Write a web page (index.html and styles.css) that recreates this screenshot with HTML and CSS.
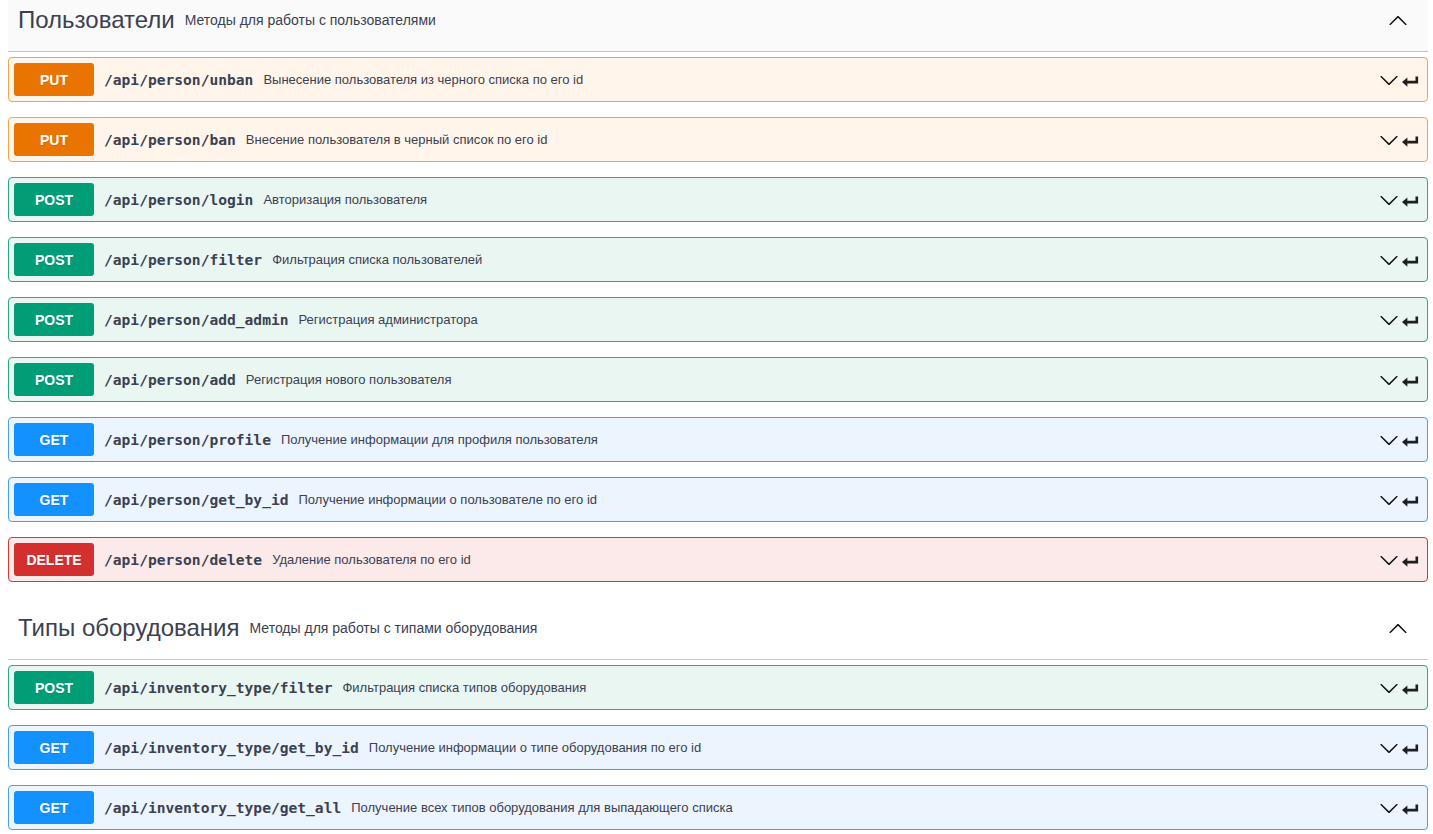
FILE: index.html
```html
<!DOCTYPE html>
<html lang="ru">
<head>
<meta charset="utf-8">
<title>API</title>
<link rel="stylesheet" href="styles.css">
</head>
<body>
<svg width="0" height="0" class="defs">
  <defs>
    <symbol id="arrow-down" viewBox="0 0 20 20"><path d="M17.418 6.109c.272-.268.709-.268.979 0s.271.701 0 .969l-7.908 7.83c-.27.268-.707.268-.979 0l-7.908-7.83c-.27-.268-.27-.701 0-.969.271-.268.709-.268.979 0L10 13.25l7.418-7.141z"/></symbol>
    <symbol id="arrow-up" viewBox="0 0 20 20"><path d="M17.418 14.908c.272.268.709.268.979 0s.271-.701 0-.969l-7.908-7.83c-.27-.268-.707-.268-.979 0l-7.908 7.83c-.27.268-.27.701 0 .969.271.268.709.268.979 0L10 7.767l7.418 7.141z"/></symbol>
    <symbol id="jump-to" viewBox="0 0 20 20"><path d="M16.8 6.5v5.6H6.5" fill="none" stroke="currentColor" stroke-width="2.6"/><path d="M2 12.1L7.4 7.4v9.4z"/></symbol>
  </defs>
</svg>
<div class="wrapper">
  <section class="tag-section">
    <h3 class="tag tag-first">
      <span class="tag-title">Пользователи</span>
      <small class="tag-desc">Методы для работы с пользователями</small>
      <span class="spacer"></span>
      <svg class="tag-arrow"><use href="#arrow-up"/></svg>
    </h3>
    <div class="opblock put"><span class="method">PUT</span><span class="path">/api/person/unban</span><span class="desc">Вынесение пользователя из черного списка по его id</span><svg class="arrow"><use href="#arrow-down"/></svg><svg class="jump"><use href="#jump-to"/></svg></div>
    <div class="opblock put"><span class="method">PUT</span><span class="path">/api/person/ban</span><span class="desc">Внесение пользователя в черный список по его id</span><svg class="arrow"><use href="#arrow-down"/></svg><svg class="jump"><use href="#jump-to"/></svg></div>
    <div class="opblock post"><span class="method">POST</span><span class="path">/api/person/login</span><span class="desc">Авторизация пользователя</span><svg class="arrow"><use href="#arrow-down"/></svg><svg class="jump"><use href="#jump-to"/></svg></div>
    <div class="opblock post"><span class="method">POST</span><span class="path">/api/person/filter</span><span class="desc">Фильтрация списка пользователей</span><svg class="arrow"><use href="#arrow-down"/></svg><svg class="jump"><use href="#jump-to"/></svg></div>
    <div class="opblock post"><span class="method">POST</span><span class="path">/api/person/add_admin</span><span class="desc">Регистрация администратора</span><svg class="arrow"><use href="#arrow-down"/></svg><svg class="jump"><use href="#jump-to"/></svg></div>
    <div class="opblock post"><span class="method">POST</span><span class="path">/api/person/add</span><span class="desc">Регистрация нового пользователя</span><svg class="arrow"><use href="#arrow-down"/></svg><svg class="jump"><use href="#jump-to"/></svg></div>
    <div class="opblock get"><span class="method">GET</span><span class="path">/api/person/profile</span><span class="desc">Получение информации для профиля пользователя</span><svg class="arrow"><use href="#arrow-down"/></svg><svg class="jump"><use href="#jump-to"/></svg></div>
    <div class="opblock get"><span class="method">GET</span><span class="path">/api/person/get_by_id</span><span class="desc">Получение информации о пользователе по его id</span><svg class="arrow"><use href="#arrow-down"/></svg><svg class="jump"><use href="#jump-to"/></svg></div>
    <div class="opblock delete"><span class="method">DELETE</span><span class="path">/api/person/delete</span><span class="desc">Удаление пользователя по его id</span><svg class="arrow"><use href="#arrow-down"/></svg><svg class="jump"><use href="#jump-to"/></svg></div>
  </section>
  <section class="tag-section">
    <h3 class="tag">
      <span class="tag-title">Типы оборудования</span>
      <small class="tag-desc">Методы для работы с типами оборудования</small>
      <span class="spacer"></span>
      <svg class="tag-arrow"><use href="#arrow-up"/></svg>
    </h3>
    <div class="opblock post"><span class="method">POST</span><span class="path">/api/inventory_type/filter</span><span class="desc">Фильтрация списка типов оборудования</span><svg class="arrow"><use href="#arrow-down"/></svg><svg class="jump"><use href="#jump-to"/></svg></div>
    <div class="opblock get"><span class="method">GET</span><span class="path">/api/inventory_type/get_by_id</span><span class="desc">Получение информации о типе оборудования по его id</span><svg class="arrow"><use href="#arrow-down"/></svg><svg class="jump"><use href="#jump-to"/></svg></div>
    <div class="opblock get"><span class="method">GET</span><span class="path">/api/inventory_type/get_all</span><span class="desc">Получение всех типов оборудования для выпадающего списка</span><svg class="arrow"><use href="#arrow-down"/></svg><svg class="jump"><use href="#jump-to"/></svg></div>
  </section>
</div>
</body>
</html>
```
FILE: styles.css
```css
html, body {
  margin: 0;
  padding: 0;
  background: #fff;
  overflow: hidden;
}
body {
  font-family: "Liberation Sans", Arial, sans-serif;
  color: #3b4151;
}
.defs {
  position: absolute;
  width: 0;
  height: 0;
  overflow: hidden;
}
.wrapper {
  padding: 0 5px 0 8px;
}
.tag {
  display: flex;
  align-items: center;
  box-sizing: border-box;
  height: 63px;
  margin: 0 0 5px;
  padding: 0 20px 0 10px;
  border-bottom: 1px solid rgba(59, 65, 81, 0.3);
  font-weight: normal;
}
.tag-first {
  margin-top: -11px;
  background: #fafafa;
}
.tag-title {
  font-size: 24px;
  color: #3b4151;
}
.tag-desc {
  font-size: 14px;
  margin-left: 10px;
  color: #3b4151;
}
.spacer {
  flex: 1;
}
.tag-arrow {
  width: 20px;
  height: 20px;
  fill: #111;
}
.opblock {
  display: flex;
  align-items: center;
  box-sizing: border-box;
  height: 45px;
  margin: 0 0 15px;
  padding: 0 7px 0 5px;
  border: 1px solid;
  border-radius: 4px;
}
.method {
  display: flex;
  align-items: center;
  justify-content: center;
  width: 80px;
  height: 33px;
  flex: none;
  border-radius: 3px;
  color: #fff;
  font-size: 14px;
  font-weight: bold;
  text-shadow: 0 1px 0 rgba(0, 0, 0, 0.1);
}
.path {
  padding: 0 10px;
  font-family: "DejaVu Sans Mono", "Liberation Mono", monospace;
  font-weight: bold;
  font-size: 14.6px;
  color: #3b4151;
}
.desc {
  flex: 1;
  font-size: 13px;
  color: #3b4151;
}
.arrow {
  width: 20px;
  height: 20px;
  fill: #111;
  flex: none;
}
.jump {
  width: 20px;
  height: 20px;
  margin-left: 1px;
  color: #1f1f1f;
  fill: #1f1f1f;
  flex: none;
}
.put { background: #fff5ea; border-color: #eea548; }
.put .method { background: #e97500; }
.post { background: #eaf6f1; border-color: #2aaa82; }
.post .method { background: #009d77; }
.get { background: #ecf4fd; border-color: #47a2e4; }
.get .method { background: #1391ff; }
.delete { background: #fce9e9; border-color: #d33a3a; }
.delete .method { background: #d32f2f; }
```
